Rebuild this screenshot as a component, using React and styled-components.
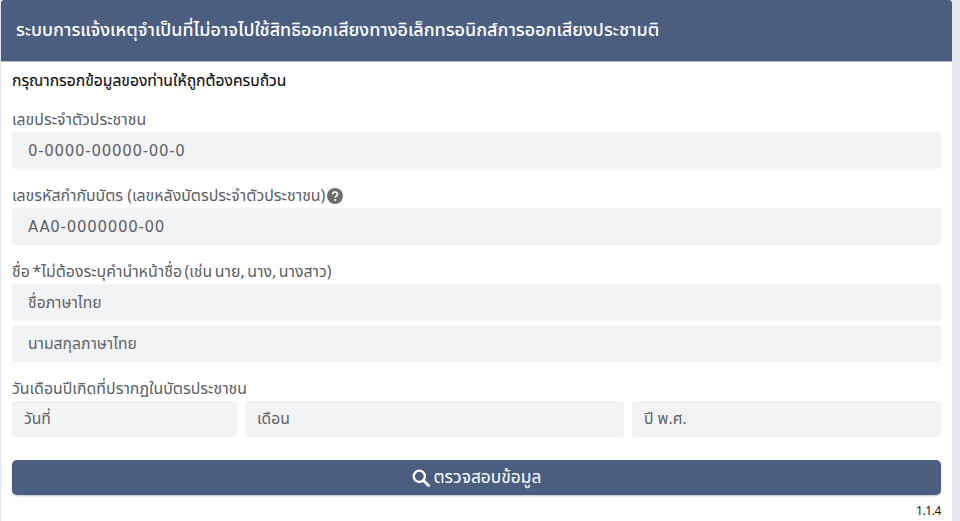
import React from "react";
import styled, { createGlobalStyle } from "styled-components";

const Global = createGlobalStyle`
  html, body { margin: 0; padding: 0; background: #e6e7ee; }
  body { font-family: "Noto Sans Thai", "Noto Sans Thai Looped", "Noto Sans", "DejaVu Sans", sans-serif; height: 521px; overflow: hidden; }
`;
const Card = styled.main`
  width: 951px; height: 521px; margin-left: 1px; background: #fff; overflow: hidden;
  display: flex; flex-direction: column;
`;
const Header = styled.header`
  height: 62px; flex: none; box-sizing: border-box; padding: 0 15px; display: flex; align-items: center;
  background: #4c5e7f; color: #fff; font-size: 17.95px; font-weight: 500; border-bottom: 1px solid #b4bccb;
  border-radius: 3px 3px 0 0; white-space: nowrap;
`;
const Body = styled.div`
  flex: 1; padding: 0 11px; display: flex; flex-direction: column;
`;
const Intro = styled.p`
  margin: 0; height: 38px; line-height: 38px; font-size: 15.7px; font-weight: 400; color: #111; white-space: nowrap; flex: none;
  -webkit-text-stroke: .15px #111;
`;
const Field = styled.section`
  display: flex; flex-direction: column; flex: none; margin-bottom: ${p => p.$gap ?? 7}px;
`;
const Label = styled.label`
  height: 32px; box-sizing: border-box; padding-top: 8px; font-size: 15.9px; color: #5b6066; display: flex; align-items: center; gap: 2px; white-space: pre;
  word-spacing: ${p => p.$ws ?? 0}px;
`;
const Input = styled.input`
  box-sizing: border-box; height: ${p => p.$h ?? 37}px; width: ${p => p.$w ?? "100%"}; flex: none;
  border: 0; outline: 0; border-radius: 4px; background: #f2f3f5; padding: 0 ${p => p.$pad ?? 16}px;
  font-family: inherit; font-size: 15.7px; color: #555; margin-bottom: ${p => p.$mb ?? 0}px; min-width: 0;
  &::placeholder { color: #5f6368; opacity: 1; }
`;
const CodeInput = styled(Input)`
  font-family: "DejaVu Sans", sans-serif; font-size: 15px; letter-spacing: .7px;
`;
const DateRow = styled.div`
  display: flex; gap: 8px;
`;
const Submit = styled.button`
  height: 35px; width: 929px; flex: none; margin-top: 23px; border: 0; border-radius: 5px; background: #4c5e7f; color: #fff;
  font: inherit; font-size: 17.4px; font-weight: 400; display: flex; align-items: center; justify-content: center; gap: 4px;
  box-shadow: 0 1px 2px rgba(60, 80, 110, .35);
`;
const Version = styled.div`
  width: 929px; text-align: right; font-size: 12px; color: #222; margin-top: 7px; letter-spacing: -.4px;
  font-family: "Noto Sans", sans-serif;
`;
const Help = () => (
  <svg width="16" height="16" viewBox="0 0 16 16" aria-hidden="true">
    <circle cx="8" cy="8" r="8" fill="#6c6f72" />
    <path d="M5.6 6.2c.1-1.4 1.1-2.2 2.5-2.2 1.4 0 2.4.8 2.4 2 0 1.9-2.2 1.8-2.2 3.6" fill="none" stroke="#fff" strokeWidth="1.7" />
    <circle cx="8.2" cy="12" r="1.1" fill="#fff" />
  </svg>
);
const SearchIcon = () => (
  <svg width="18" height="18" viewBox="0 0 18 18" aria-hidden="true">
    <circle cx="7.3" cy="7.3" r="5.6" fill="none" stroke="#fff" strokeWidth="2.3" />
    <path d="M11.4 11.4 16.6 16.6" stroke="#fff" strokeWidth="2.8" strokeLinecap="round" />
  </svg>
);

export default function App() {
  return (
    <>
      <Global />
      <Card>
        <Header>ระบบการแจ้งเหตุจำเป็นที่ไม่อาจไปใช้สิทธิออกเสียงทางอิเล็กทรอนิกส์การออกเสียงประชามติ</Header>
        <Body>
          <Intro>กรุณากรอกข้อมูลของท่านให้ถูกต้องครบถ้วน</Intro>
          <Field>
            <Label>เลขประจำตัวประชาชน</Label>
            <CodeInput placeholder="0-0000-00000-00-0" />
          </Field>
          <Field>
            <Label>เลขรหัสกำกับบัตร (เลขหลังบัตรประจำตัวประชาชน)<Help /></Label>
            <CodeInput placeholder="AA0-0000000-00" />
          </Field>
          <Field>
            <Label $ws={-1.6}>ชื่อ *ไม่ต้องระบุคำนำหน้าชื่อ (เช่น นาย, นาง, นางสาว)</Label>
            <Input placeholder="ชื่อภาษาไทย" $mb={4} />
            <Input placeholder="นามสกุลภาษาไทย" />
          </Field>
          <Field $gap={0}>
            <Label>วันเดือนปีเกิดที่ปรากฏในบัตรประชาชน</Label>
            <DateRow>
              <Input placeholder="วันที่" $w="225px" $pad={12} $h={36} />
              <Input placeholder="เดือน" $w="379px" $pad={12} $h={36} />
              <Input placeholder="ปี พ.ศ." $w="309px" $pad={12} $h={36} />
            </DateRow>
          </Field>
          <Submit type="button"><SearchIcon />ตรวจสอบข้อมูล</Submit>
          <Version>1.1.4</Version>
        </Body>
      </Card>
    </>
  );
}
